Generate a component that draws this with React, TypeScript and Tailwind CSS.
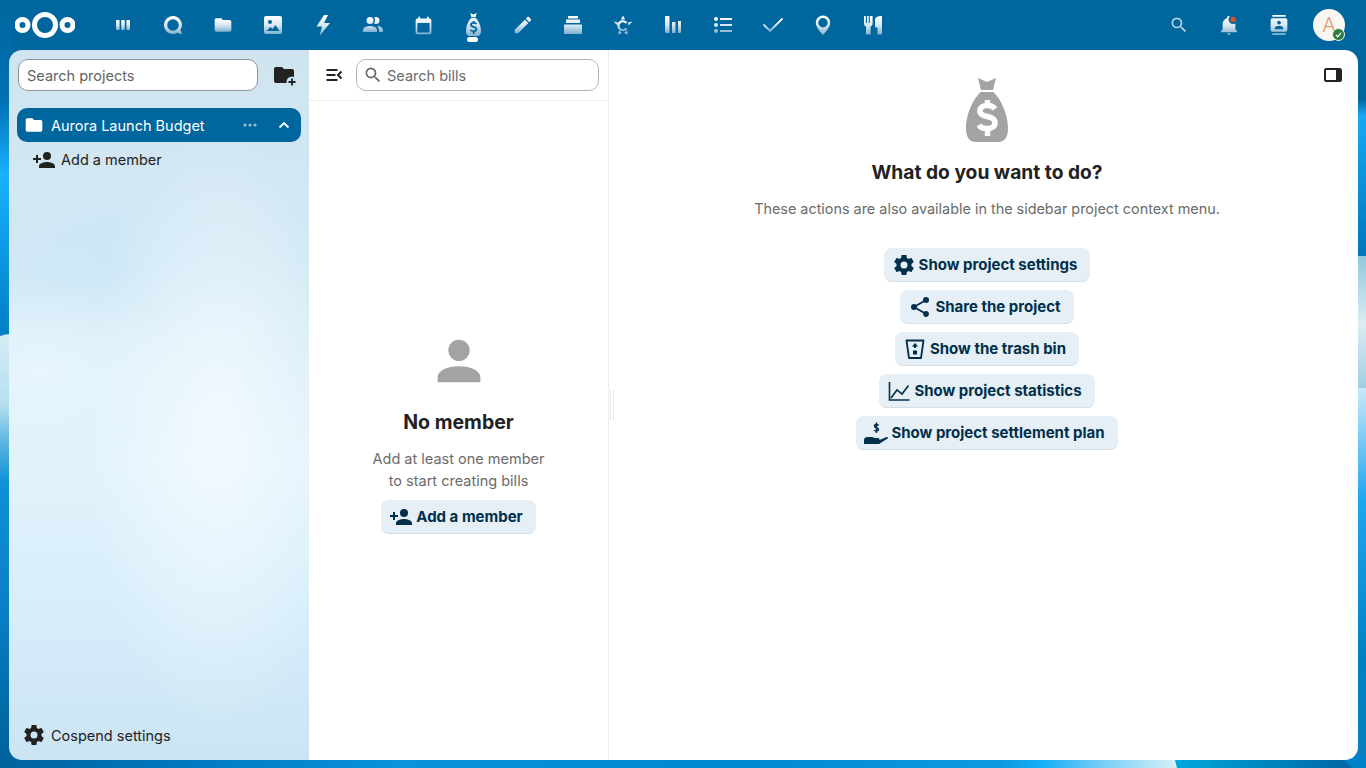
import React from 'react';

const paths = {
  folder: 'M10,4H4C2.89,4 2,4.89 2,6V18A2,2 0 0,0 4,20H20A2,2 0 0,0 22,18V8C22,6.89 21.1,6 20,6H12L10,4Z',
  accountPlus:
    'M15,14C12.33,14 7,15.33 7,18V20H23V18C23,15.33 17.67,14 15,14M6,10V7H4V10H1V12H4V15H6V12H9V10M15,12A4,4 0 0,0 19,8A4,4 0 0,0 15,4A4,4 0 0,0 11,8A4,4 0 0,0 15,12Z',
  account:
    'M12,4A4,4 0 0,1 16,8A4,4 0 0,1 12,12A4,4 0 0,1 8,8A4,4 0 0,1 12,4M12,14C16.42,14 20,15.79 20,18V20H4V18C4,15.79 7.58,14 12,14Z',
  cog: 'M12,15.5A3.5,3.5 0 0,1 8.5,12A3.5,3.5 0 0,1 12,8.5A3.5,3.5 0 0,1 15.5,12A3.5,3.5 0 0,1 12,15.5M19.43,12.97C19.47,12.65 19.5,12.33 19.5,12C19.5,11.67 19.47,11.34 19.43,11L21.54,9.37C21.73,9.22 21.78,8.95 21.66,8.73L19.66,5.27C19.54,5.05 19.27,4.96 19.05,5.05L16.56,6.05C16.04,5.66 15.5,5.32 14.87,5.07L14.5,2.42C14.46,2.18 14.25,2 14,2H10C9.75,2 9.54,2.18 9.5,2.42L9.13,5.07C8.5,5.32 7.96,5.66 7.44,6.05L4.95,5.05C4.73,4.96 4.46,5.05 4.34,5.27L2.34,8.73C2.21,8.95 2.27,9.22 2.46,9.37L4.57,11C4.53,11.34 4.5,11.67 4.5,12C4.5,12.33 4.53,12.65 4.57,12.97L2.46,14.63C2.27,14.78 2.21,15.05 2.34,15.27L4.34,18.73C4.46,18.95 4.73,19.03 4.95,18.95L7.44,17.94C7.96,18.34 8.5,18.68 9.13,18.93L9.5,21.58C9.54,21.82 9.75,22 10,22H14C14.25,22 14.46,21.82 14.5,21.58L14.87,18.93C15.5,18.67 16.04,18.34 16.56,17.94L19.05,18.95C19.27,19.03 19.54,18.95 19.66,18.73L21.66,15.27C21.78,15.05 21.73,14.78 21.54,14.63L19.43,12.97Z',
  share:
    'M18,16.08C17.24,16.08 16.56,16.38 16.04,16.85L8.91,12.7C8.96,12.47 9,12.24 9,12C9,11.76 8.96,11.53 8.91,11.3L15.96,7.19C16.5,7.69 17.21,8 18,8A3,3 0 0,0 21,5A3,3 0 0,0 18,2A3,3 0 0,0 15,5C15,5.24 15.04,5.47 15.09,5.7L8.04,9.81C7.5,9.31 6.79,9 6,9A3,3 0 0,0 3,12A3,3 0 0,0 6,15C6.79,15 7.5,14.69 8.04,14.19L15.16,18.34C15.11,18.55 15.08,18.77 15.08,19C15.08,20.61 16.39,21.91 18,21.91C19.61,21.91 20.92,20.61 20.92,19A2.92,2.92 0 0,0 18,16.08Z',
  magnify:
    'M9.5,3A6.5,6.5 0 0,1 16,9.5C16,11.11 15.41,12.59 14.44,13.73L14.71,14H15.5L20.5,19L19,20.5L14,15.5V14.71L13.73,14.44C12.59,15.41 11.11,16 9.5,16A6.5,6.5 0 0,1 3,9.5A6.5,6.5 0 0,1 9.5,3M9.5,5C7,5 5,7 5,9.5C5,12 7,14 9.5,14C12,14 14,12 14,9.5C14,7 12,5 9.5,5Z',
  bell: 'M21,19V20H3V19L5,17V11C5,7.9 7.03,5.17 10,4.29C10,4.19 10,4.1 10,4A2,2 0 0,1 12,2A2,2 0 0,1 14,4C14,4.1 14,4.19 14,4.29C16.97,5.17 19,7.9 19,11V17L21,19M14,21A2,2 0 0,1 12,23A2,2 0 0,1 10,21',
  contacts:
    'M20,0H4V2H20V0M4,24H20V22H4V24M20,4H4A2,2 0 0,0 2,6V18A2,2 0 0,0 4,20H20A2,2 0 0,0 22,18V6A2,2 0 0,0 20,4M12,6.75A2.25,2.25 0 0,1 14.25,9A2.25,2.25 0 0,1 12,11.25A2.25,2.25 0 0,1 9.75,9A2.25,2.25 0 0,1 12,6.75M17,17H7V15.5C7,13.83 10.33,13 12,13C13.67,13 17,13.83 17,15.5V17Z',
};

const Mdi: React.FC<{ d: string; size?: number; className?: string }> = ({ d, size = 24, className }) => (
  <svg viewBox="0 0 24 24" width={size} height={size} fill="currentColor" className={className}>
    <path d={d} />
  </svg>
);

// Wallpaper seen round the rounded app frame
const Wallpaper: React.FC = () => (
  <svg className="absolute inset-0" width={1366} height={768} viewBox="0 0 1366 768">
    <defs>
      <linearGradient id="fade" x1="0" y1="0" x2="0" y2="1">
        <stop offset="0" stopColor="#ffffff" />
        <stop offset="0.5" stopColor="#d8e8f1" />
        <stop offset="1" stopColor="#7fb0d0" />
      </linearGradient>
      <linearGradient id="leftA" gradientUnits="userSpaceOnUse" x1="0" y1="0" x2="0" y2="335">
        <stop offset="0" stopColor="#00679e" />
        <stop offset="0.3" stopColor="#0070b4" />
        <stop offset="0.52" stopColor="#1ab0ff" />
        <stop offset="1" stopColor="#007fc6" />
      </linearGradient>
      <linearGradient id="leftB" gradientUnits="userSpaceOnUse" x1="0" y1="335" x2="0" y2="768">
        <stop offset="0" stopColor="#d5edf5" />
        <stop offset="0.16" stopColor="#b5dff0" />
        <stop offset="0.25" stopColor="#5bb5e0" />
        <stop offset="0.34" stopColor="#0f90d8" />
        <stop offset="0.62" stopColor="#0a80c8" />
        <stop offset="0.85" stopColor="#006ca8" />
        <stop offset="1" stopColor="#00609a" />
      </linearGradient>
      <linearGradient id="rightA" gradientUnits="userSpaceOnUse" x1="0" y1="50" x2="0" y2="256">
        <stop offset="0" stopColor="#00679e" />
        <stop offset="0.24" stopColor="#00679e" />
        <stop offset="0.32" stopColor="#18a8f5" />
        <stop offset="1" stopColor="#0076bb" />
      </linearGradient>
      <linearGradient id="rightB" gradientUnits="userSpaceOnUse" x1="0" y1="256" x2="0" y2="392">
        <stop offset="0" stopColor="#8fc8dc" />
        <stop offset="0.5" stopColor="#dcecf4" />
        <stop offset="1" stopColor="#9ccde0" />
      </linearGradient>
      <linearGradient id="rightC" gradientUnits="userSpaceOnUse" x1="0" y1="390" x2="0" y2="768">
        <stop offset="0" stopColor="#c5e8fa" />
        <stop offset="0.29" stopColor="#20a5f0" />
        <stop offset="0.72" stopColor="#0080c2" />
        <stop offset="1" stopColor="#0a80c0" />
      </linearGradient>
      <linearGradient id="bottomA" gradientUnits="userSpaceOnUse" x1="0" y1="0" x2="1177" y2="0">
        <stop offset="0" stopColor="#00639d" />
        <stop offset="0.16" stopColor="#0079bf" />
        <stop offset="0.34" stopColor="#0a92dc" />
        <stop offset="0.62" stopColor="#0086cf" />
        <stop offset="0.85" stopColor="#0e9ae0" />
        <stop offset="0.885" stopColor="#14aef8" />
        <stop offset="0.94" stopColor="#7fd0f5" />
        <stop offset="1" stopColor="#d5f1fa" />
      </linearGradient>
      <linearGradient id="bottomB" gradientUnits="userSpaceOnUse" x1="1177" y1="0" x2="1345" y2="0">
        <stop offset="0" stopColor="#00a8dc" />
        <stop offset="1" stopColor="#0068a5" />
      </linearGradient>
    </defs>
    <rect width={1366} height={768} fill="#00679e" />
    <rect x={0} y={0} width={12} height={336} fill="url(#leftA)" />
    <path d="M0 336 Q5 334 12 334 V768 H0 Z" fill="url(#leftB)" />
    <rect x={1354} y={50} width={12} height={206} fill="url(#rightA)" />
    <rect x={1354} y={256} width={12} height={136} fill="url(#rightB)" />
    <rect x={1354} y={388} width={12} height={380} fill="url(#rightC)" />
    <rect x={0} y={756} width={1180} height={12} fill="url(#bottomA)" />
    <path d="M1174 756 H1345 L1366 768 H1177 Z" fill="url(#bottomB)" />
    <path d="M1340 756 H1366 V768 H1352 Z" fill="#0080c8" />
  </svg>
);

const NavIcon: React.FC<{ children: React.ReactNode; active?: boolean }> = ({ children, active }) => (
  <div className="relative flex h-[50px] w-[50px] items-center justify-center">
    {children}
    {active && <span className="absolute left-[19px] top-[37px] h-[5px] w-[11px] rounded-full bg-white" />}
  </div>
);

const Fade: React.FC<{ d: string; size?: number; stroke?: boolean }> = ({ d, size = 24, stroke }) => (
  <svg viewBox="0 0 24 24" width={size} height={size}>
    {stroke ? (
      <path d={d} fill="none" stroke="url(#fade)" strokeWidth={1.8} strokeLinecap="round" />
    ) : (
      <path d={d} fill="url(#fade)" fillRule="evenodd" />
    )}
  </svg>
);

const bagBody =
  'M12 0 L21 4 L30 0 L27 12 H15 Z M15 14 H27 C34 19 42 36 42 50 C42 60 38 64 32 64 H10 C4 64 0 60 0 50 C0 36 8 19 15 14 Z';
const bagDollar = 'M29 31 C26 26 14 26 14 33 C14 41 29 36 29 45 C29 52 16 52 13 47 M21.5 22 V28 M21.5 51 V58';

const BagIcon: React.FC<{ width: number; height: number; fill: string; mark: string }> = ({ width, height, fill, mark }) => (
  <svg viewBox="0 0 42 64" width={width} height={height}>
    <path d={bagBody} fill={fill} />
    <path d={bagDollar} fill="none" stroke={mark} strokeWidth={5.5} />
  </svg>
);

const Logo: React.FC = () => (
  <svg viewBox="0 0 60 28" width={60} height={28} fill="none" stroke="#ffffff">
    <circle cx={7.500} cy={14} r={5.500} strokeWidth={5} />
    <circle cx={30} cy={14} r={10.500} strokeWidth={5} />
    <circle cx={52.500} cy={14} r={5.500} strokeWidth={5} />
  </svg>
);

const Header: React.FC = () => (
  <header className="relative flex h-[50px] items-center pl-[15px] pr-[12px]">
    <Logo />
    <nav className="ml-[23px] flex flex-1 items-center">
      <NavIcon>
        <Fade d="M5.800 7h2a.8.8 0 0 1 .8.8v8.400a.8.8 0 0 1-.8.8h-2a.8.8 0 0 1-.8-.8V7.800a.8.8 0 0 1 .8-.8z M11 7h2a.8.8 0 0 1 .8.8v8.400a.8.8 0 0 1-.8.8h-2a.8.8 0 0 1-.8-.8V7.800a.8.8 0 0 1 .8-.8z M16.200 7h2a.8.8 0 0 1 .8.8v8.400a.8.8 0 0 1-.8.8h-2a.8.8 0 0 1-.8-.8V7.800a.8.8 0 0 1 .8-.8z" />
      </NavIcon>
      <NavIcon>
        <svg viewBox="0 0 24 24" width={24} height={24}>
          <path
            d="M12 3a9 9 0 1 0 4.400 16.850L21 21.500 19.500 16.800A9 9 0 0 0 12 3z M12 6.200a5.800 5.800 0 1 1 0 11.600 5.800 5.800 0 0 1 0-11.600z"
            fill="url(#fade)"
            fillRule="evenodd"
          />
        </svg>
      </NavIcon>
      <NavIcon>
        <Fade d={paths.folder} size={20} />
      </NavIcon>
      <NavIcon>
        <Fade d="M5 3h14a2 2 0 0 1 2 2v14a2 2 0 0 1-2 2H5a2 2 0 0 1-2-2V5a2 2 0 0 1 2-2z M9 7a2 2 0 1 0 0 4 2 2 0 0 0 0-4z M5.500 18h13l-4-6-3 4-2-2z" />
      </NavIcon>
      <NavIcon>
        <Fade d="M13 2 5.500 13.500h5.500L8.500 23 19 10h-6L17 2z" />
      </NavIcon>
      <NavIcon>
        <Fade d="M16 17V19H2V17C2 17 2 13 9 13S16 17 16 17M12.5 7.5A3.5 3.5 0 1 0 9 11A3.5 3.5 0 0 0 12.5 7.5M15.94 13A5.32 5.32 0 0 1 18 17V19H22V17C22 17 22 13.37 15.94 13M15 4A3.39 3.39 0 0 0 13.07 4.59A5 5 0 0 1 13.07 10.41A3.39 3.39 0 0 0 15 11A3.5 3.5 0 0 0 15 4Z" />
      </NavIcon>
      <NavIcon>
        <Fade d="M19 4h-1V2h-2v2H8V2H6v2H5a2 2 0 0 0-2 2v14a2 2 0 0 0 2 2h14a2 2 0 0 0 2-2V6a2 2 0 0 0-2-2z M19 20H5V9h14z" size={21} />
      </NavIcon>
      <NavIcon active>
        <svg viewBox="0 0 42 64" width={15} height={23} className="mb-[1px]">
          <path d={bagBody} fill="url(#fade)" />
          <path d={bagDollar} fill="none" stroke="#00679e" strokeWidth={5} />
        </svg>
      </NavIcon>
      <NavIcon>
        <Fade d="M20.71,7.04C21.1,6.65 21.1,6 20.71,5.63L18.37,3.29C18,2.9 17.35,2.9 16.96,3.29L15.12,5.12L18.87,8.87M3,17.25V21H6.75L17.81,9.93L14.06,6.18L3,17.25Z" size={22} />
      </NavIcon>
      <NavIcon>
        <Fade d="M7 3h10v2.500H7z M5 6.500h14V10H5z M3.500 11.500h17a.5.5 0 0 1 .5.500V21H3v-9a.5.5 0 0 1 .5-.5z" />
      </NavIcon>
      <NavIcon>
        <svg viewBox="0 0 24 24" width={24} height={24}>
          <path
            d="M12 2.500l2.200 4h-4.400z M2.500 8.500l4.500 1-.5 3z M21.500 8.500l-4.500 1 .5 3z M7 21.500l1-4 3 2.500z M17 21.500l-1-4-3 2.500z"
            fill="url(#fade)"
          />
          <path d="M15.500 10a4.500 4.500 0 1 0 0 5.500" fill="none" stroke="url(#fade)" strokeWidth={2.200} />
        </svg>
      </NavIcon>
      <NavIcon>
        <Fade d="M4.500 3h3a1 1 0 0 1 1 1v16h-3a1.500 1.500 0 0 1-1.500-1.500V3.500z M11 9h3.500v11H11z M17 8h3v10.500a1.500 1.500 0 0 1-1.500 1.500H17z" />
      </NavIcon>
      <NavIcon>
        <Fade d="M9 5h12v2H9z M9 11h12v2H9z M9 17h12v2H9z M3 6a2 2 0 1 0 4 0 2 2 0 1 0-4 0z M3 12a2 2 0 1 0 4 0 2 2 0 1 0-4 0z M3 18a2 2 0 1 0 4 0 2 2 0 1 0-4 0z" />
      </NavIcon>
      <NavIcon>
        <Fade d="M3 12l6 6L21 6" stroke />
      </NavIcon>
      <NavIcon>
        <Fade d="M12 2.500A7.200 7.200 0 0 1 19.200 9.700C19.200 14.750 12 22 12 22S4.800 14.750 4.800 9.700A7.200 7.200 0 0 1 12 2.500z M12 5A4.700 4.700 0 0 0 7.300 9.700 4.700 4.700 0 0 0 12 14.400 4.700 4.700 0 0 0 16.700 9.700 4.700 4.700 0 0 0 12 5z" />
      </NavIcon>
      <NavIcon>
        <Fade d="M3 3h1.800v7h1.100V3h1.800v7h1.100V3H11.600V10.500C11.600 12 10.800 13 9.600 13.500V21.500H5V13.500C3.800 13 3 12 3 10.500Z M14 7C14 4 16.500 3 21 3V21.500H16.500V14.500H14Z" />
      </NavIcon>
    </nav>
    <div className="flex items-center">
      <NavIcon>
        <Mdi d={paths.magnify} size={20} className="text-[#b4d4e6]" />
      </NavIcon>
      <NavIcon>
        <svg viewBox="0 0 24 24" width={22} height={22}>
          <path d={paths.bell} fill="url(#fade)" />
          <circle cx={16.500} cy={6} r={5} fill="#00679e" />
          <circle cx={16.500} cy={6} r={3} fill="#d9512c" />
        </svg>
      </NavIcon>
      <NavIcon>
        <Fade d={paths.contacts} size={20} />
      </NavIcon>
      <NavIcon>
        <div className="relative flex h-[32px] w-[32px] items-center justify-center rounded-full bg-[#fbf6f0] text-[20px] font-light text-[#dd9c6e]">
          A
          <span className="absolute bottom-0 right-0 flex h-[13px] w-[13px] items-center justify-center rounded-full border border-[#fbf6f0] bg-[#2d7b41]">
            <svg viewBox="0 0 12 12" width={9} height={9} fill="none" stroke="#ffffff" strokeWidth={1.600}>
              <path d="M2.500 6.500l2.500 2.500 4.500-5.500" />
            </svg>
          </span>
        </div>
      </NavIcon>
    </div>
  </header>
);

const FolderPlus: React.FC = () => (
  <svg viewBox="0 0 24 24" width={24} height={24}>
    <path d={paths.folder} fill="#222222" />
    <circle cx={20} cy={19} r={5.500} fill="#cde4f0" />
    <path d="M20 15.500v7M16.500 19h7" stroke="#222222" strokeWidth={1.800} fill="none" />
  </svg>
);

const Sidebar: React.FC = () => (
  <aside className="flex w-[300px] shrink-0 flex-col bg-[radial-gradient(ellipse_130px_300px_at_208px_380px,rgba(246,252,255,0.8),rgba(246,252,255,0)),radial-gradient(ellipse_150px_90px_at_30px_320px,rgba(235,248,254,0.75),rgba(235,248,254,0)),radial-gradient(ellipse_170px_80px_at_105px_210px,rgba(200,230,248,0.5),rgba(200,230,248,0)),linear-gradient(180deg,#cfe4ef_0%,#d3e9f5_30%,#e2f3fc_58%,#d6edfa_80%,#cbe4f3_100%)]">
    <div className="flex h-[50px] items-center pl-[9px] pr-[13px]">
      <div className="flex h-[32px] w-[240px] items-center rounded-[10px] border border-[#8f9498] bg-white pl-[8px] pt-[1px] text-[14.5px] text-[#636363]">
        Search projects
      </div>
      <div className="ml-auto">
        <FolderPlus />
      </div>
    </div>
    <div className="mx-[8px] mt-[8px] flex h-[34px] items-center rounded-[10px] bg-[#00679e] pl-[7px] text-white">
      <Mdi d={paths.folder} size={20} className="text-white" />
      <span className="ml-[7px] pt-[1px] text-[14.5px] font-normal">Aurora Launch Budget</span>
      <svg viewBox="0 0 16 4" width={16} height={4} fill="#9dbcd0" className="ml-auto">
        <circle cx={3} cy={2} r={1.600} />
        <circle cx={8} cy={2} r={1.600} />
        <circle cx={13} cy={2} r={1.600} />
      </svg>
      <svg viewBox="0 0 12 8" width={12} height={8} fill="none" stroke="#ffffff" strokeWidth={1.800} className="ml-[20px] mr-[11px]">
        <path d="M1.500 6.500L6 2l4.500 4.500" />
      </svg>
    </div>
    <div className="mt-[1px] flex h-[34px] items-center pl-[23px] text-[14.5px] text-[#222222]">
      <Mdi d={paths.accountPlus} size={24} />
      <span className="ml-[5px]">Add a member</span>
    </div>
    <div className="mt-auto flex h-[50px] items-center pl-[13px] text-[14.5px] text-[#222222]">
      <Mdi d={paths.cog} size={24} />
      <span className="ml-[5px] pt-[1px]">Cospend settings</span>
    </div>
  </aside>
);

const ActionButton: React.FC<{ icon: React.ReactNode; label: string }> = ({ icon, label }) => (
  <button
    type="button"
    className="flex h-[34px] items-center rounded-[8px] border-b border-[#d3dfe7] bg-[#e5eff5] pl-[8px] pr-[13px] text-[15px] font-bold text-[#002f4b]"
  >
    {icon}
    <span className="ml-[3px] pt-[1px]">{label}</span>
  </button>
);

const BillList: React.FC = () => (
  <section className="flex w-[300px] shrink-0 flex-col border-r border-[#ededed] bg-white">
    <div className="flex h-[51px] shrink-0 items-center border-b border-[#ededed] pl-[13px]">
      <svg viewBox="0 0 24 24" width={24} height={24} fill="none" stroke="#222222" strokeWidth={2}>
        <path d="M4.500 7h11M4.500 12h9M4.500 17h11M19.500 8.500L16 12l3.500 3.500" />
      </svg>
      <div className="ml-[10px] flex h-[32px] w-[243px] items-center rounded-[10px] border border-[#b5b5b5] pl-[6px] text-[14.5px] text-[#6b6b6b]">
        <Mdi d={paths.magnify} size={20} className="text-[#666666]" />
        <span className="ml-[4px] pt-[1px]">Search bills</span>
      </div>
    </div>
    <div className="flex flex-1 flex-col items-center pt-[228px]">
      <Mdi d={paths.account} size={64} className="text-[#a3a3a3]" />
      <h2 className="mt-[13px] text-[19.5px] leading-[32px] font-bold text-[#222222]">No member</h2>
      <p className="mt-[10px] text-center text-[14.5px] leading-[22px] text-[#6b6b6b]">
        Add at least one member
        <br />
        to start creating bills
      </p>
      <div className="mt-[8px]">
        <ActionButton icon={<Mdi d={paths.accountPlus} size={24} />} label="Add a member" />
      </div>
    </div>
  </section>
);

const TrashIcon: React.FC = () => (
  <svg viewBox="0 0 24 24" width={24} height={24} fill="none" stroke="currentColor" strokeWidth={1.800}>
    <path d="M3.500 3.500H20.500L18 21H6Z" strokeLinejoin="round" />
    <path d="M12 6l3.200 3.500h-2.200v1.500h-2V9.500H8.800z" fill="currentColor" stroke="none" />
    <rect x={10} y={13.500} width={4} height={4} fill="currentColor" stroke="none" />
  </svg>
);

const ChartIcon: React.FC = () => (
  <svg viewBox="0 0 24 24" width={24} height={24} fill="none" stroke="currentColor" strokeWidth={1.600}>
    <path d="M2.500 3V21H22.500" />
    <path d="M4 19L10 11L15 15L21.500 6.500" />
  </svg>
);

const HandIcon: React.FC = () => (
  <svg viewBox="0 0 24 24" width={24} height={24} fill="currentColor">
    <path d="M0 23 V19 Q0 16 4 16 H8 L11 17 H14 Q16 17 15.500 19 L22 16.200 Q24 15.800 24 17.200 L15 23 Z" />
    <path
      d="M14.500 4.500C14 3.300 10.500 3 10.500 5 10.500 7.200 14.500 6.300 14.500 8.500 14.500 10.300 11 10.300 10.300 9M12.400 1.500V12"
      fill="none"
      stroke="currentColor"
      strokeWidth={1.500}
    />
  </svg>
);

const Main: React.FC = () => (
  <main className="relative flex flex-1 flex-col items-center bg-white pl-[7px] pt-[28px]">
    <span className="absolute left-[1px] top-[340px] h-[30px] w-[4px] border-x border-[#e6e6e6]" />
    <svg viewBox="0 0 24 24" width={24} height={24} fill="none" stroke="#222222" className="absolute right-[13px] top-[13px]">
      <rect x={4} y={6} width={16} height={12} rx={1.500} strokeWidth={2} />
      <rect x={15} y={6} width={5} height={12} fill="#222222" strokeWidth={0} />
    </svg>
    <BagIcon width={42} height={64} fill="#a3a3a3" mark="#ffffff" />
    <h2 className="mt-[14px] text-[19.2px] leading-[32px] font-bold text-[#222222]">What do you want to do?</h2>
    <p className="mt-[10px] text-[14.4px] leading-[22px] text-[#6b6b6b]">These actions are also available in the sidebar project context menu.</p>
    <div className="mt-[28px] flex flex-col items-center gap-[8px]">
      <ActionButton icon={<Mdi d={paths.cog} size={24} />} label="Show project settings" />
      <ActionButton icon={<Mdi d={paths.share} size={24} />} label="Share the project" />
      <ActionButton icon={<TrashIcon />} label="Show the trash bin" />
      <ActionButton icon={<ChartIcon />} label="Show project statistics" />
      <ActionButton icon={<HandIcon />} label="Show project settlement plan" />
    </div>
  </main>
);

export default function App() {
  return (
    <div className="relative h-[768px] w-[1366px] overflow-hidden font-['Inter',sans-serif]">
      <Wallpaper />
      <Header />
      <div className="relative ml-[9px] mr-[8px] flex h-[710px] overflow-hidden rounded-[13px]">
        <Sidebar />
        <BillList />
        <Main />
      </div>
    </div>
  );
}
